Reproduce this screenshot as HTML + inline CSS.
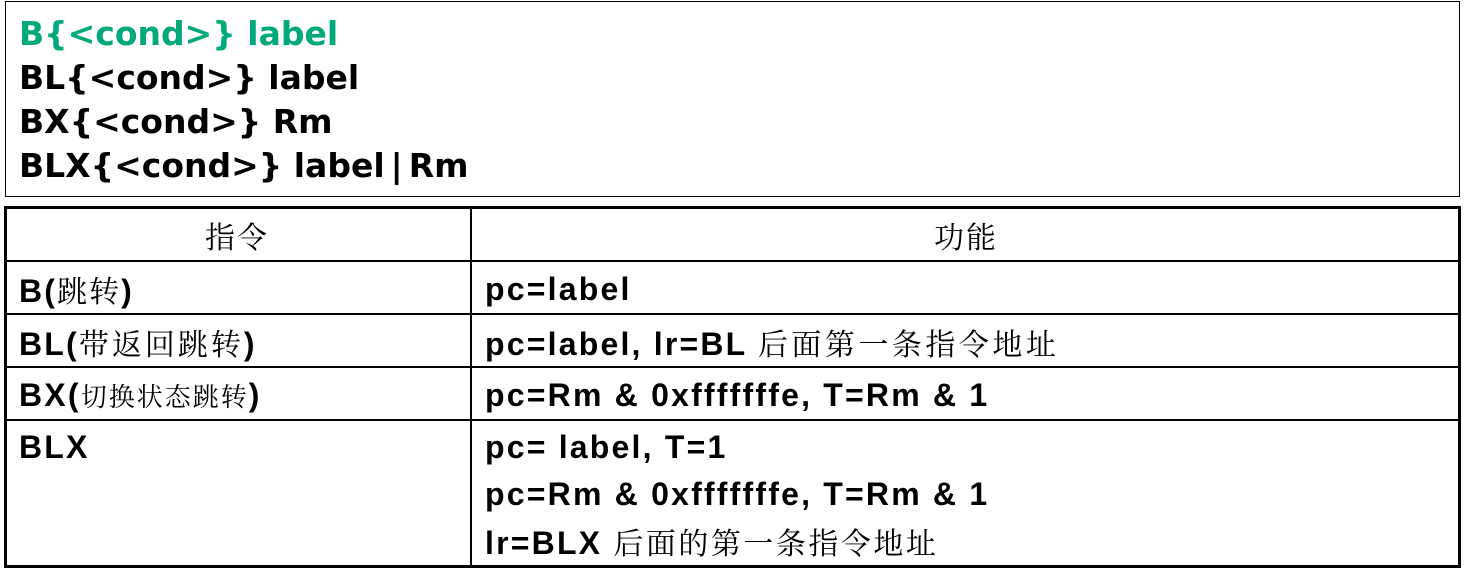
<!DOCTYPE html>
<html><head><meta charset="utf-8"><style>
body{margin:0;width:1467px;height:571px;background:#fff;position:relative;overflow:hidden;font-family:"Liberation Sans","Noto Sans CJK SC",sans-serif;}
.box{position:absolute;left:5px;top:1px;width:1455px;height:196px;border:1px solid #000;box-sizing:border-box;}
.top{position:absolute;left:19px;font-family:"DejaVu Sans",sans-serif;font-weight:bold;font-size:33px;line-height:44px;white-space:nowrap;}
.t{position:absolute;white-space:nowrap;font-weight:bold;font-size:32px;letter-spacing:2.2px;line-height:40px;}
.cj{font-family:"Noto Serif CJK SC",serif;font-weight:normal;letter-spacing:1px;}
.v{position:absolute;background:#000;}
</style></head><body>
<div class="box"></div>
<div class="top" style="top:12px;color:#00a97a">B{&lt;cond&gt;} label</div>
<div class="top" style="top:56px">BL{&lt;cond&gt;} label</div>
<div class="top" style="top:100px">BX{&lt;cond&gt;} Rm</div>
<div class="top" style="top:144px">BLX{&lt;cond&gt;} label<span style="margin:0 6px">|</span>Rm</div>

<div class="v" style="left:4px;top:206px;width:1457px;height:3px"></div>
<div class="v" style="left:4px;top:565px;width:1457px;height:3px"></div>
<div class="v" style="left:4px;top:206px;width:3px;height:362px"></div>
<div class="v" style="left:1458px;top:206px;width:3px;height:362px"></div>
<div class="v" style="left:470px;top:206px;width:2px;height:362px"></div>
<div class="v" style="left:4px;top:260px;width:1457px;height:2px"></div>
<div class="v" style="left:4px;top:313px;width:1457px;height:2px"></div>
<div class="v" style="left:4px;top:366px;width:1457px;height:2px"></div>
<div class="v" style="left:4px;top:419px;width:1457px;height:2px"></div>

<div class="t cj" style="left:205px;top:215px;font-size:30px;letter-spacing:2px">指令</div>
<div class="t cj" style="left:934px;top:215px;font-size:30px;letter-spacing:2px">功能</div>

<div class="t" style="left:19px;top:269px">B(<span class="cj" style="font-size:30px;letter-spacing:2px">跳转</span>)</div>
<div class="t" style="left:19px;top:322px">BL(<span class="cj" style="font-size:30px;letter-spacing:3px">带返回跳转</span>)</div>
<div class="t" style="left:19px;top:375px">BX(<span class="cj" style="font-size:26px;letter-spacing:2px">切换状态跳转</span>)</div>
<div class="t" style="left:19px;top:427px">BLX</div>

<div class="t" style="left:485px;top:269px">pc=label</div>
<div class="t" style="left:485px;top:322px">pc=label, lr=BL <span class="cj" style="font-size:30px;letter-spacing:3.5px">后面第一条指令地址</span></div>
<div class="t" style="left:485px;top:375px">pc=Rm &amp; 0xfffffffe, T=Rm &amp; 1</div>
<div class="t" style="left:485px;top:427px">pc= label, T=1</div>
<div class="t" style="left:485px;top:474px">pc=Rm &amp; 0xfffffffe, T=Rm &amp; 1</div>
<div class="t" style="left:485px;top:521px">lr=BLX <span class="cj" style="font-size:30px;letter-spacing:2.5px">后面的第一条指令地址</span></div>
</body></html>
